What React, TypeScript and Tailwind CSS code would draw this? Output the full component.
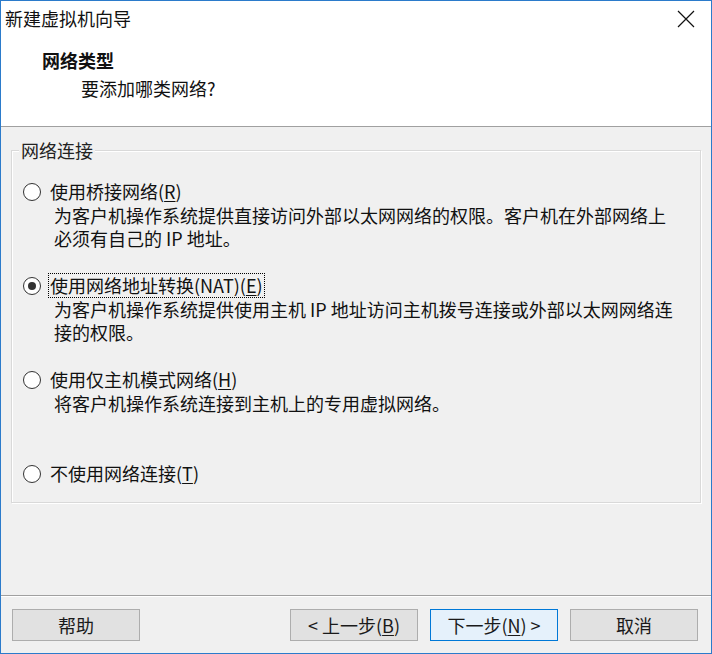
const font = { fontFamily: '"Noto Sans CJK SC", "Noto Sans", sans-serif' };

function Radio({ checked }: { checked?: boolean }) {
  return (
    <span className="w-[18px] h-[18px] rounded-full border border-[#333333] bg-white flex items-center justify-center shrink-0">
      {checked && <span className="w-[8px] h-[8px] rounded-full bg-[#333333]" />}
    </span>
  );
}

type Option = {
  label: string;
  key: string;
  tail?: string;
  lines: string[];
  checked?: boolean;
};

const options: Option[] = [
  {
    label: "使用桥接网络(",
    key: "R",
    lines: [
      "为客户机操作系统提供直接访问外部以太网网络的权限。客户机在外部网络上",
      "必须有自己的 IP 地址。",
    ],
  },
  {
    label: "使用网络地址转换(NAT)(",
    key: "E",
    lines: [
      "为客户机操作系统提供使用主机 IP 地址访问主机拨号连接或外部以太网网络连",
      "接的权限。",
    ],
    checked: true,
  },
  {
    label: "使用仅主机模式网络(",
    key: "H",
    lines: ["将客户机操作系统连接到主机上的专用虚拟网络。"],
  },
  {
    label: "不使用网络连接(",
    key: "T",
    lines: [],
  },
];

function Button({
  children,
  primary,
}: {
  children: React.ReactNode;
  primary?: boolean;
}) {
  return (
    <button
      className={
        primary
          ? "w-[128px] h-[32px] border border-[#0078d7] bg-[#e5f1fb] text-[18px] leading-[30px] text-[#1a1a1a]"
          : "w-[128px] h-[32px] border border-[#adadad] bg-[#e1e1e1] text-[18px] leading-[30px] text-[#1a1a1a]"
      }
    >
      {children}
    </button>
  );
}

export default function App() {
  return (
    <div
      className="w-[712px] h-[654px] border border-[#2b7bcb] flex flex-col bg-[#f0f0f0] text-[#111111] overflow-hidden"
      style={font}
    >
      {/* title bar */}
      <div className="h-[34px] bg-white flex items-center justify-between pl-[4px] pr-[16px]">
        <span className="text-[18px] leading-[34px]">新建虚拟机向导</span>
        <svg width="18" height="18" viewBox="0 0 18 18" className="mt-[2px]">
          <path d="M1 1 L17 17 M17 1 L1 17" stroke="#111" strokeWidth="1.2" />
        </svg>
      </div>

      {/* header */}
      <div className="h-[92px] bg-white border-b border-[#a0a0a0] pt-[13px]">
        <div className="pl-[41px] text-[18px] leading-[24px] font-bold">网络类型</div>
        <div className="pl-[80px] mt-[4px] text-[18px] leading-[24px]">要添加哪类网络?</div>
      </div>

      {/* body */}
      <div className="flex-1 flex flex-col">
        <div className="relative mt-[23px] mx-[10px] h-[353px] border border-[#d9d9d9] shadow-[inset_1px_1px_0_#ffffff,1px_1px_0_#ffffff] pt-[29px]">
          <span className="absolute left-[7px] top-[-12px] px-[2px] bg-[#f0f0f0] text-[18px] leading-[22px] text-[#222222]">
            网络连接
          </span>
          {options.map((o) => (
            <div key={o.key} className="h-[94px]">
              <div className="flex items-center pl-[11px] h-[23px]">
                <Radio checked={o.checked} />
                <span
                  className={
                    o.checked
                      ? "ml-[7px] border border-dotted border-black px-[1px] text-[18px] leading-[23px]"
                      : "ml-[7px] border border-transparent px-[1px] text-[18px] leading-[23px]"
                  }
                >
                  {o.label}
                  <span className="underline underline-offset-2">{o.key}</span>)
                </span>
              </div>
              <div className="pl-[42px] pt-[1px]">
                {o.lines.map((l) => (
                  <div key={l} className="text-[18px] leading-[23px] whitespace-nowrap">
                    {l}
                  </div>
                ))}
              </div>
            </div>
          ))}
        </div>

        <div className="flex-1" />

        {/* footer */}
        <div className="border-t border-[#a0a0a0] shadow-[inset_0_1px_0_#ffffff] pt-[13px] pb-[12px] pl-[11px] pr-[13px] flex items-center">
          <Button>帮助</Button>
          <div className="flex-1" />
          <div className="flex gap-[12px]">
            <Button>
              &lt; 上一步(<span className="underline underline-offset-2">B</span>)
            </Button>
            <Button primary>
              下一步(<span className="underline underline-offset-2">N</span>) &gt;
            </Button>
            <Button>取消</Button>
          </div>
        </div>
      </div>
    </div>
  );
}
